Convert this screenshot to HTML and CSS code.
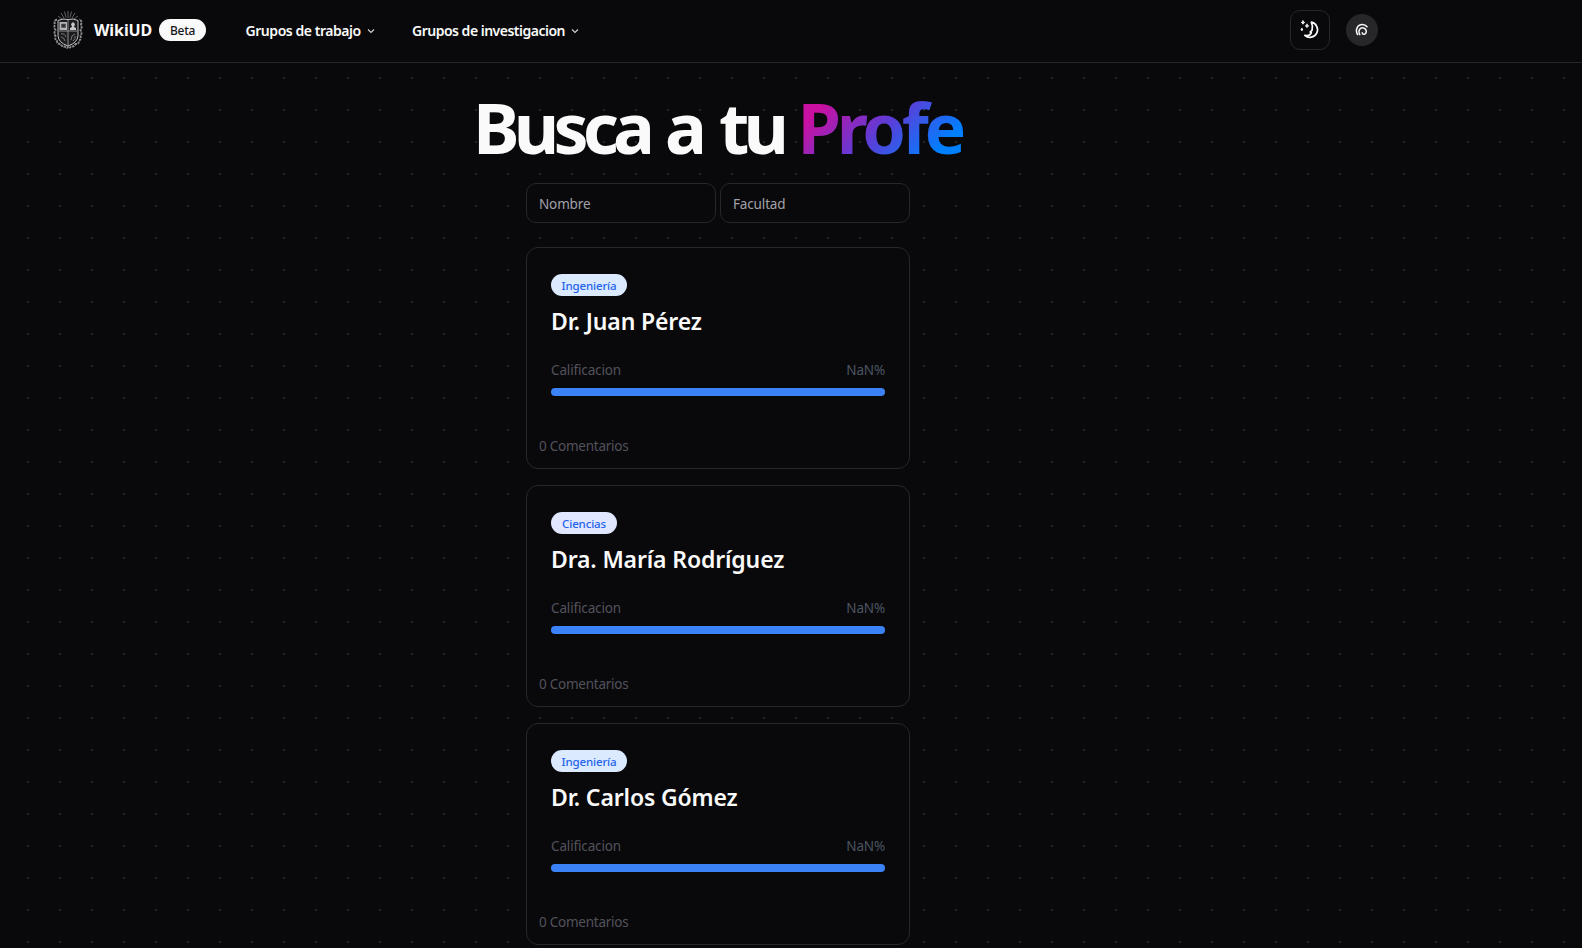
FILE: index.html
```html
<!DOCTYPE html>
<html lang="es">
<head>
<meta charset="utf-8">
<title>WikiUD</title>
<link rel="stylesheet" href="styles.css">
</head>
<body>
<header class="topbar">
  <a class="brand">
    <svg class="crest" viewBox="0 0 30 40" fill="none" stroke="#a9a9ac" stroke-width="1">
      <g stroke-width=".8" stroke="#77777b"><path d="M15 1v7M11.500 1.500l1.500 6M18.500 1.500l-1.500 6M8 3l3 5M22 3l-3 5M5 6l4 3M25 6l-4 3"/></g>
      <path d="M5 10.500q5-2.500 10-1q5-1.500 10 1v15q0 7-10 10.500q-10-3.500-10-10.500z" fill="#1c1c1e" stroke="#c4c4c8"/>
      <path d="M6.500 12h7.500v8H6.500z" fill="#b5b5b8" stroke="none"/>
      <path d="M8.500 14h4v3.500h-4z" fill="#333" stroke="#555" stroke-width=".6"/>
      <path d="M17 20v-2l2-1-1-3 2-2 2 2-1 3 2 1v2z" fill="#c8c8cc" stroke="none"/>
      <path d="M6 21h18M15 10v25" stroke="#8d8d91"/>
      <path d="M8 24q4-1 5 3M8 27q3 0 4 4M18 30q0-5 4-6M20 31q3-2 2-5" stroke="#77777b"/>
      <path d="M4 9.500q-3.500 1-2 5q-1.500 3 .5 5.500q-2 3 0 6q-1 3 1.500 5q0 3 3.500 3q1.500 3 4.500 2.500q2 2.500 3 .5q1 2 3-.5q3 .5 4.500-2.500q3.500 0 3.500-3q2.500-2 1.500-5q2-3 0-6q2-2.500.5-5.500q1.500-4-2-5" stroke="#8d8d91" stroke-dasharray="2.500 .8" stroke-width="1.900"/>
    </svg>
    <span class="brand-name">WikiUD</span>
    <span class="beta">Beta</span>
  </a>
  <nav class="nav">
    <a class="nav-item"><span>Grupos de trabajo</span><svg class="chev" viewBox="0 0 8 8"><path d="M1 2.500l3 3 3-3"/></svg></a>
    <a class="nav-item"><span>Grupos de investigacion</span><svg class="chev" viewBox="0 0 8 8"><path d="M1 2.500l3 3 3-3"/></svg></a>
  </nav>
  <div class="actions">
    <button class="theme" aria-label="Tema">
      <svg width="20" height="20" viewBox="0 0 20 20" fill="none" stroke="#fafafa" stroke-width="1.700" stroke-linejoin="round" stroke-linecap="round"><path d="M11.300 2.200A7.600 7.600 0 1 1 4.800 15.300C7.800 16.200 10.200 15 11.300 12.800L10.200 12 12 10.400C12.800 7.500 12.600 4.800 11.300 2.200z"/><path fill="#fafafa" stroke-width=".9" d="M3 .8l.5 1.200 1.200.5-1.200.5-.5 1.200-.5-1.200-1.200-.5 1.200-.5zM7 4.200l.5 1.200 1.200.5-1.200.5-.5 1.200-.5-1.200-1.200-.5 1.200-.5zM1.900 8.500l.3.800.8.300-.8.300-.3.800-.3-.8-.8-.3.800-.3z"/></svg>
    </button>
    <span class="avatar"><svg width="14" height="14" viewBox="0 0 14 14" fill="none" stroke="#fafafa" stroke-width="1.500" stroke-linecap="round"><path d="M2.600 11.500C-.2 7 2.500 1.500 7.200 1.500c2.200 0 3.800.9 4.800 2.300M4.800 11.600C3 8.500 4.300 4.800 7.300 4.800c3.800 0 4.800 3.700 3.200 5.700-1 1.300-3.200 1-3.300-.8"/></svg></span>
  </div>
</header>
<main class="content">
  <h1 class="title"><span class="busca">Busca</span> <span class="a">a</span> <span class="tu">tu</span> <span class="profe">Profe</span></h1>
  <form class="filters">
    <input class="field" placeholder="Nombre">
    <input class="field" placeholder="Facultad">
  </form>
  <section class="list">
    <article class="card">
      <span class="badge">Ingeniería</span>
      <h2 class="name">Dr. Juan Pérez</h2>
      <div class="rating"><span>Calificacion</span><span class="score">NaN%</span></div>
      <div class="bar"></div>
      <p class="comments">0 Comentarios</p>
    </article>
    <article class="card">
      <span class="badge badge-indigo">Ciencias</span>
      <h2 class="name">Dra. María Rodríguez</h2>
      <div class="rating"><span>Calificacion</span><span class="score">NaN%</span></div>
      <div class="bar"></div>
      <p class="comments">0 Comentarios</p>
    </article>
    <article class="card">
      <span class="badge">Ingeniería</span>
      <h2 class="name">Dr. Carlos Gómez</h2>
      <div class="rating"><span>Calificacion</span><span class="score">NaN%</span></div>
      <div class="bar"></div>
      <p class="comments">0 Comentarios</p>
    </article>
  </section>
</main>
</body>
</html>
```
FILE: styles.css
```css
* { box-sizing: border-box; margin: 0; padding: 0; }
html, body { height: 948px; overflow: hidden; }
body {
  background-color: #09090b;
  background-image: conic-gradient(from 90deg at 30px 30px, #242427 90deg, transparent 0);
  background-size: 32px 32px;
  background-position: -3px 15px;
  color: #fafafa;
  font-family: "Noto Sans", "Open Sans", sans-serif;
  font-size: 14px;
}
.topbar {
  height: 63px;
  display: flex;
  align-items: flex-start;
  background: #09090b;
  border-bottom: 1px solid #27272a;
  padding-left: 53px;
}
.brand { display: flex; align-items: center; height: 60px; width: 192.500px; }
.crest { width: 30px; height: 40px; flex: none; }
.brand-name { margin-left: 11px; width: 65px; font-size: 16px; font-weight: 700; letter-spacing: -.1px; white-space: nowrap; }
.beta {
  width: 47px; height: 22px; line-height: 23px; border-radius: 11px;
  background: #fafafa; color: #18181b; text-align: center; font-size: 12px; font-weight: 500; letter-spacing: -.3px;
}
.nav { display: flex; height: 60px; align-items: center; font-weight: 600; white-space: nowrap; letter-spacing: -.5px; }
.nav-item { display: flex; align-items: center; }
.nav-item:first-child { width: 166.500px; letter-spacing: -.45px; }
.chev { width: 8px; height: 8px; margin: 2px 0 0 6px; fill: none; stroke: #d4d4d8; stroke-width: 1.1; }
.actions { margin-left: auto; margin-right: 204px; display: flex; gap: 16px; height: 60px; align-items: center; }
.theme {
  width: 40px; height: 40px; border: 1px solid #27272a; border-radius: 10px; background: #09090b;
  display: grid; place-items: center;
}
.avatar { width: 32px; height: 32px; border-radius: 50%; background: #27272a; display: grid; place-items: center; }
.content { width: 500px; margin-left: 473px; }
.title { display: flex; height: 120px; padding-top: 20px; font-size: 70px; line-height: 88px; font-weight: 700; letter-spacing: -5.8px; white-space: nowrap; }
.busca { width: 192px; }
.a { width: 54px; }
.tu { width: 78.500px; }
.profe {
  height: 88px; padding-right: 8px; letter-spacing: -4.3px; color: transparent;
  background: linear-gradient(135deg, #c910a0 18%, #5b3dd8 50%, #0080ff 80%);
  -webkit-background-clip: text; background-clip: text;
}
.filters { display: flex; gap: 4px; width: 384px; margin-left: 53px; }
.field {
  width: 190px; height: 40px; border: 1px solid #27272a; border-radius: 10px; background: #09090b;
  padding: 1px 12px 0; color: #fafafa; font: 13.5px "Noto Sans", sans-serif; letter-spacing: -.15px;
}
.field::placeholder { color: #a1a1aa; opacity: 1; }
.list { width: 384px; margin: 24px 0 0 53px; display: flex; flex-direction: column; gap: 16px; }
.card { height: 222px; border: 1px solid #27272a; border-radius: 12px; background: #09090b; padding: 26px 24px 0; }
.badge {
  display: block; width: 76px; height: 22px; line-height: 23px; border-radius: 11px; text-align: center;
  font-size: 11.5px; font-weight: 500; letter-spacing: -.15px; background: #dbeafe; color: #2563eb;
}
.badge-indigo { width: 66px; background: #e0e7ff; }
.name { margin-top: 8px; font-size: 23px; line-height: 34px; font-weight: 600; letter-spacing: -.15px; white-space: nowrap; }
.rating { display: flex; justify-content: space-between; margin-top: 22px; line-height: 20px; color: #52525b; font-size: 13.5px; letter-spacing: -.15px; }
.score { color: #4b5563; }
.bar { height: 8px; border-radius: 4px; background: #3b82f6; margin-top: 8px; }
.comments { margin: 40px 0 0 -12px; line-height: 20px; color: #52525b; font-size: 13.5px; letter-spacing: -.25px; }
```
